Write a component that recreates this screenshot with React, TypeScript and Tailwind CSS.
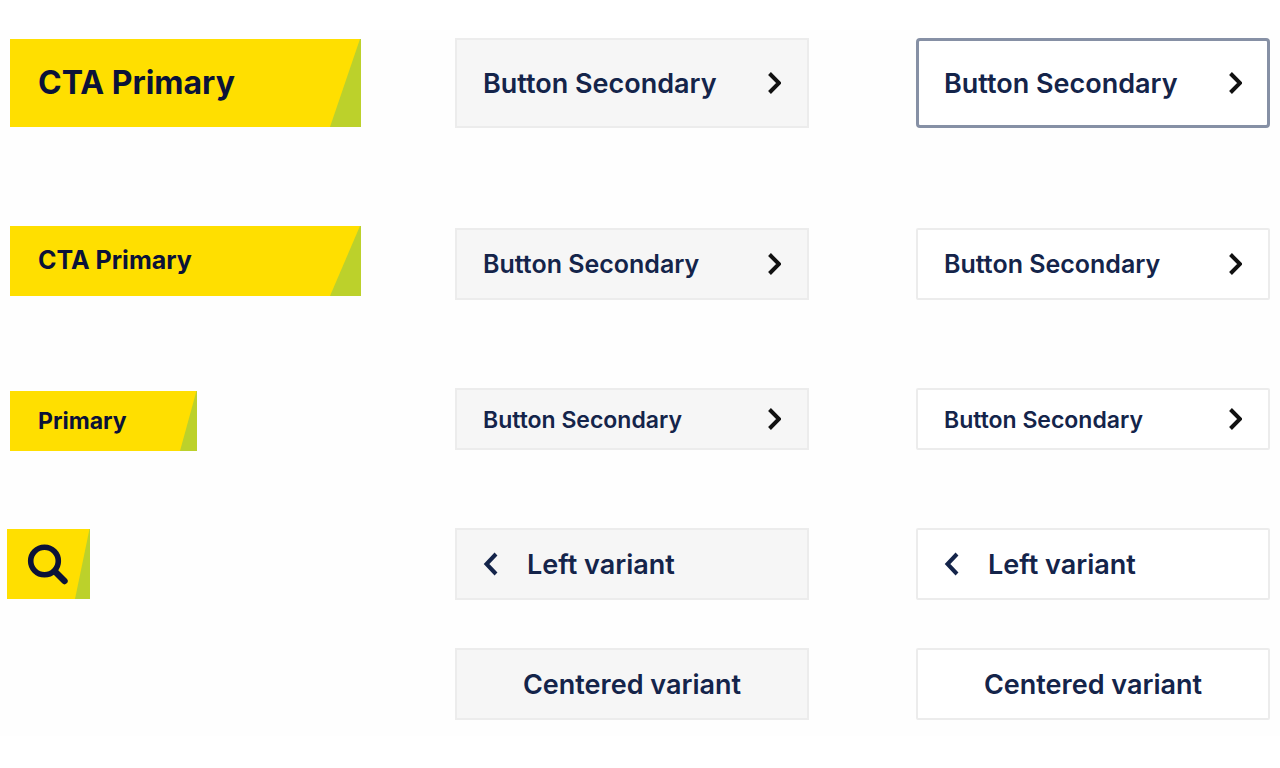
import clsx from 'clsx';

type SecondaryProps = {
    label: string;
    look?: 'filled' | 'plain' | 'outlined';
    variant?: 'right' | 'left' | 'centered';
    className?: string;
};

const looks = {
    filled: 'bg-[#f6f6f6] border-2 border-[#ececec] px-[26px]',
    plain: 'bg-white border-2 border-[#ececec] rounded-xs px-[26px]',
    outlined: 'bg-white border-3 border-[#8690a5] rounded-sm px-[25px]',
};

function Chevron({ direction }: { direction: 'left' | 'right' }) {
    return (
        <svg viewBox="0 0 16 24" className="w-4 h-6 shrink-0" fill="none" aria-hidden="true">
            {direction === 'right' ? (
                <path d="M4.5 2.5 L14 12 L4.5 21.5" stroke="#111111" strokeWidth="4" />
            ) : (
                <path d="M13 2 L3.5 12 L13 22" stroke="#14244a" strokeWidth="4" />
            )}
        </svg>
    );
}

// Green slanted corner on the right edge of the yellow buttons
function Corner({ className }: { className: string }) {
    return (
        <svg
            viewBox="0 0 30 88"
            preserveAspectRatio="none"
            className={clsx('h-full shrink-0', className)}
            aria-hidden="true"
        >
            <path d="M29 0 H30 V88 H0 Z" fill="#bcd12b" />
        </svg>
    );
}

function PrimaryButton({ label, className, corner }: { label: string; className: string; corner: string }) {
    return (
        <button
            type="button"
            className={clsx(
                'flex items-center justify-between bg-[#ffdf00] pl-7 font-bold text-[#0b1238] whitespace-nowrap',
                className
            )}
        >
            <span>{label}</span>
            <Corner className={corner} />
        </button>
    );
}

function SecondaryButton({ label, look = 'filled', variant = 'right', className }: SecondaryProps) {
    return (
        <button
            type="button"
            className={clsx(
                'flex w-full items-center font-semibold text-[#14244a] whitespace-nowrap',
                variant === 'right' && 'justify-between',
                variant === 'left' && 'gap-7',
                variant === 'centered' && 'justify-center',
                looks[look],
                className
            )}
        >
            {variant === 'left' && <Chevron direction="left" />}
            <span className="pt-0.5">{label}</span>
            {variant === 'right' && <Chevron direction="right" />}
        </button>
    );
}

function SecondaryColumn({ look, firstLook }: { look: 'filled' | 'plain'; firstLook: 'filled' | 'outlined' }) {
    return (
        <div className="flex flex-col pt-2">
            <SecondaryButton label="Button Secondary" look={firstLook} className="h-[90px] text-[27px]" />
            <SecondaryButton label="Button Secondary" look={look} className="mt-[100px] h-[72px] text-[25px]" />
            <SecondaryButton label="Button Secondary" look={look} className="mt-[88px] h-[62px] text-[23px]" />
            <SecondaryButton label="Left variant" look={look} variant="left" className="mt-[78px] h-[72px] text-[27px]" />
            <SecondaryButton
                label="Centered variant"
                look={look}
                variant="centered"
                className="mt-12 h-[72px] text-[27px]"
            />
        </div>
    );
}

export default function App() {
    return (
        <div className="min-h-screen bg-white py-[30px] font-['Inter',sans-serif]">
            <main className="grid grid-cols-[448fr_461fr_354fr] bg-[#fefefe] pl-[7px] pr-[10px] pb-4">
                <div className="flex flex-col pt-[9px] pr-[94px]">
                    <div className="flex flex-col pl-[3px]">
                        <PrimaryButton label="CTA Primary" className="h-[88px] text-[32px]" corner="w-[31px]" />
                        <PrimaryButton label="CTA Primary" className="mt-[99px] h-[70px] text-[25px]" corner="w-[31px]" />
                        <PrimaryButton
                            label="Primary"
                            className="mt-[95px] h-[60px] w-[187px] text-[23px]"
                            corner="w-[17px]"
                        />
                    </div>
                    <button
                        type="button"
                        aria-label="Search"
                        className="mt-[78px] flex h-[70px] w-[83px] items-center justify-between bg-[#ffdf00] pl-5 text-[#0b1238]"
                    >
                        <svg viewBox="0 0 42 42" className="size-[42px] shrink-0" fill="none" stroke="currentColor" aria-hidden="true">
                            <circle cx="17.5" cy="18" r="13.8" strokeWidth="5.6" />
                            <path d="M28 28.5 L37.5 38" strokeWidth="6.4" strokeLinecap="round" />
                        </svg>
                        <Corner className="w-[15px]" />
                    </button>
                </div>
                <div className="pr-[107px]">
                    <SecondaryColumn look="filled" firstLook="filled" />
                </div>
                <SecondaryColumn look="plain" firstLook="outlined" />
            </main>
        </div>
    );
}
